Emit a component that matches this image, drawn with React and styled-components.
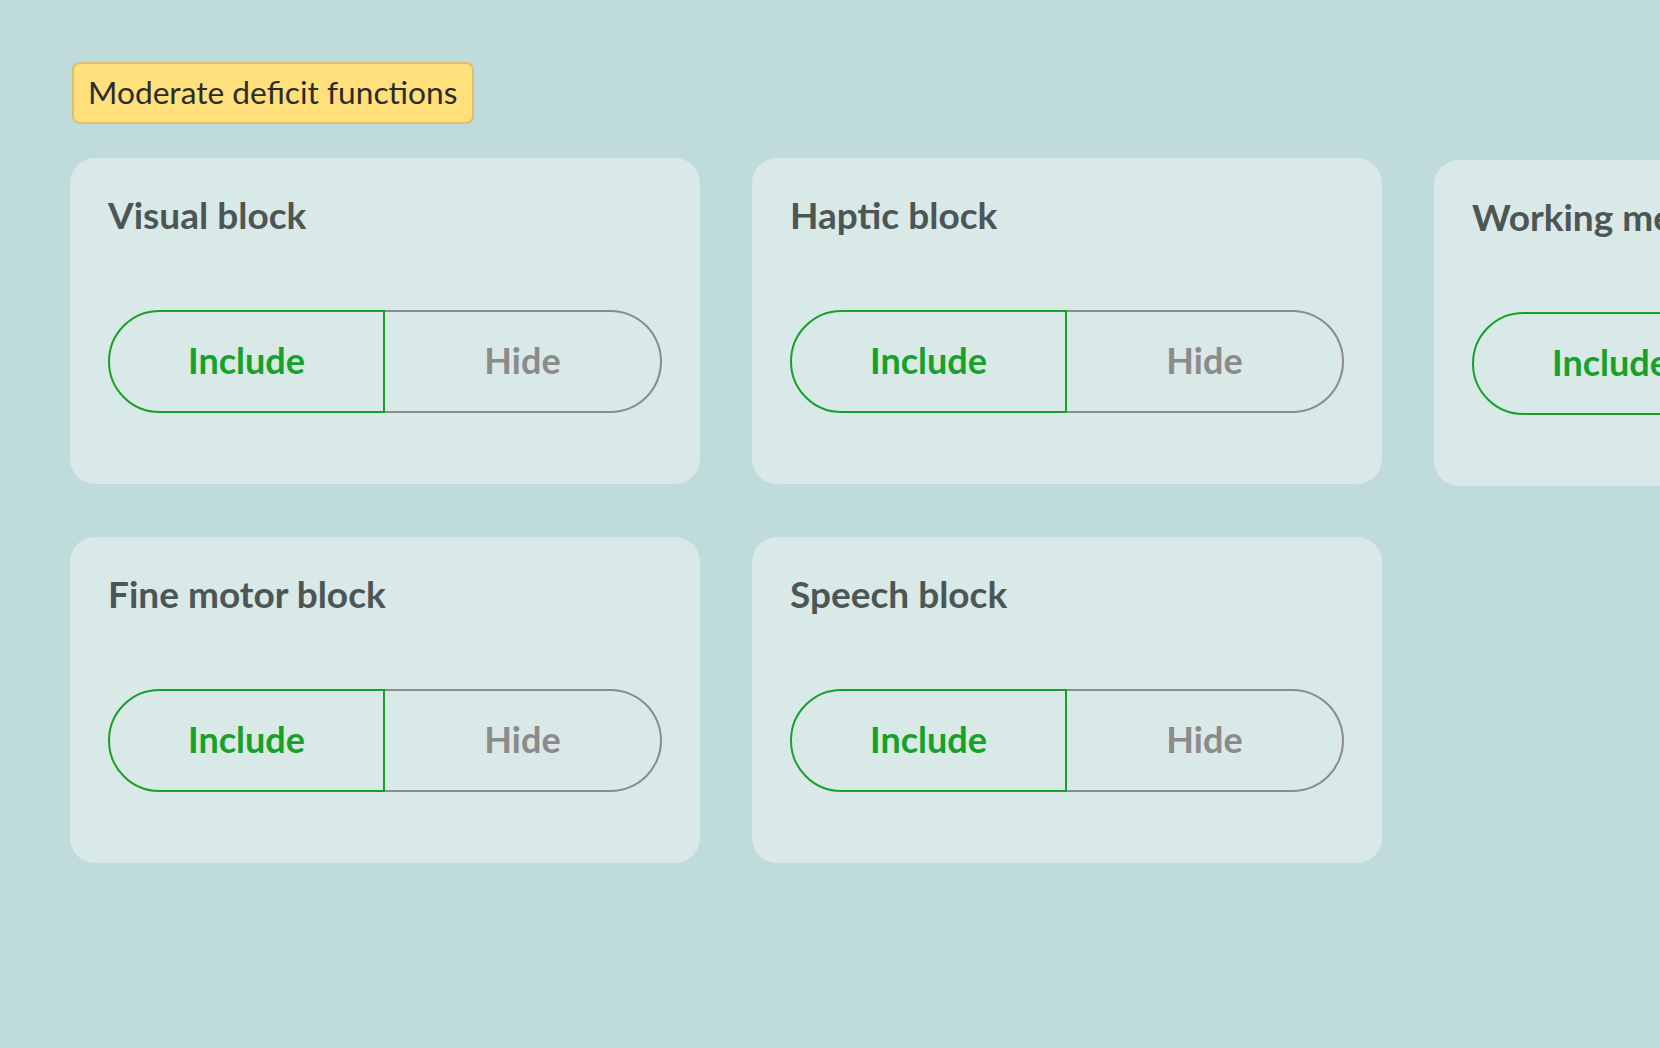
import styled, { createGlobalStyle } from "styled-components";

const GlobalStyle = createGlobalStyle`
  html, body {
    margin: 0;
    padding: 0;
    background-color: #c0dbdb;
    overflow: hidden;
  }

  body {
    font-family: "Lato", "Noto Sans", sans-serif;
  }
`;

const Page = styled.div`
  min-height: 1048px;
  padding: 62px 0 0 70px;
  box-sizing: border-box;
`;

const Badge = styled.div`
  display: inline-flex;
  align-items: center;
  height: 62px;
  box-sizing: border-box;
  margin-left: 2px;
  padding: 0 15px 2px 14px;
  background-color: #ffe07b;
  border: 2px solid #dcc06c;
  border-radius: 8px;
  color: #2c2c27;
  font-size: 31.7px;
  font-weight: 400;
`;

const Grid = styled.div`
  display: grid;
  grid-template-columns: repeat(3, 630px);
  column-gap: 52px;
  row-gap: 51px;
  margin-top: 34px;
  width: max-content;
`;

const Card = styled.section`
  box-sizing: border-box;
  height: 326px;
  padding: 35px 38px 0;
  background-color: #d8e9e7;
  border-radius: 25px;
  margin-top: ${(p) => p.$shift || 0}px;
`;

const Title = styled.h3`
  margin: 0;
  height: 117px;
  color: #4c5655;
  font-size: 37px;
  font-weight: 700;
  line-height: 44px;
`;

const Toggle = styled.div`
  display: grid;
  grid-template-columns: 1fr 1fr;
  width: 554px;
  height: 103px;
`;

const Segment = styled.button`
  display: flex;
  align-items: center;
  justify-content: center;
  box-sizing: border-box;
  margin: 0;
  padding: 0 0 3px;
  background: transparent;
  font-family: inherit;
  font-size: 36px;
  font-weight: 700;
  color: ${(p) => (p.$active ? "#17a12a" : "#8b8b8b")};
  border: 2px solid ${(p) => (p.$active ? "#17a12a" : "#8b8b8b")};
  border-left-width: ${(p) => (p.$side === "right" ? 0 : 2)}px;
  border-radius: ${(p) =>
    p.$side === "left" ? "52px 0 0 52px" : "0 52px 52px 0"};
  cursor: pointer;
`;

const blocks = [
  { name: "Visual block" },
  { name: "Haptic block" },
  { name: "Working memory block", shift: 2 },
  { name: "Fine motor block" },
  { name: "Speech block" },
];

function BlockCard({ name, shift }) {
  return (
    <Card $shift={shift}>
      <Title>{name}</Title>
      <Toggle>
        <Segment $side="left" $active>
          Include
        </Segment>
        <Segment $side="right">Hide</Segment>
      </Toggle>
    </Card>
  );
}

export default function App() {
  return (
    <>
      <GlobalStyle />
      <Page>
        <Badge>Moderate deficit functions</Badge>
        <Grid>
          {blocks.map((b) => (
            <BlockCard key={b.name} name={b.name} shift={b.shift} />
          ))}
        </Grid>
      </Page>
    </>
  );
}
